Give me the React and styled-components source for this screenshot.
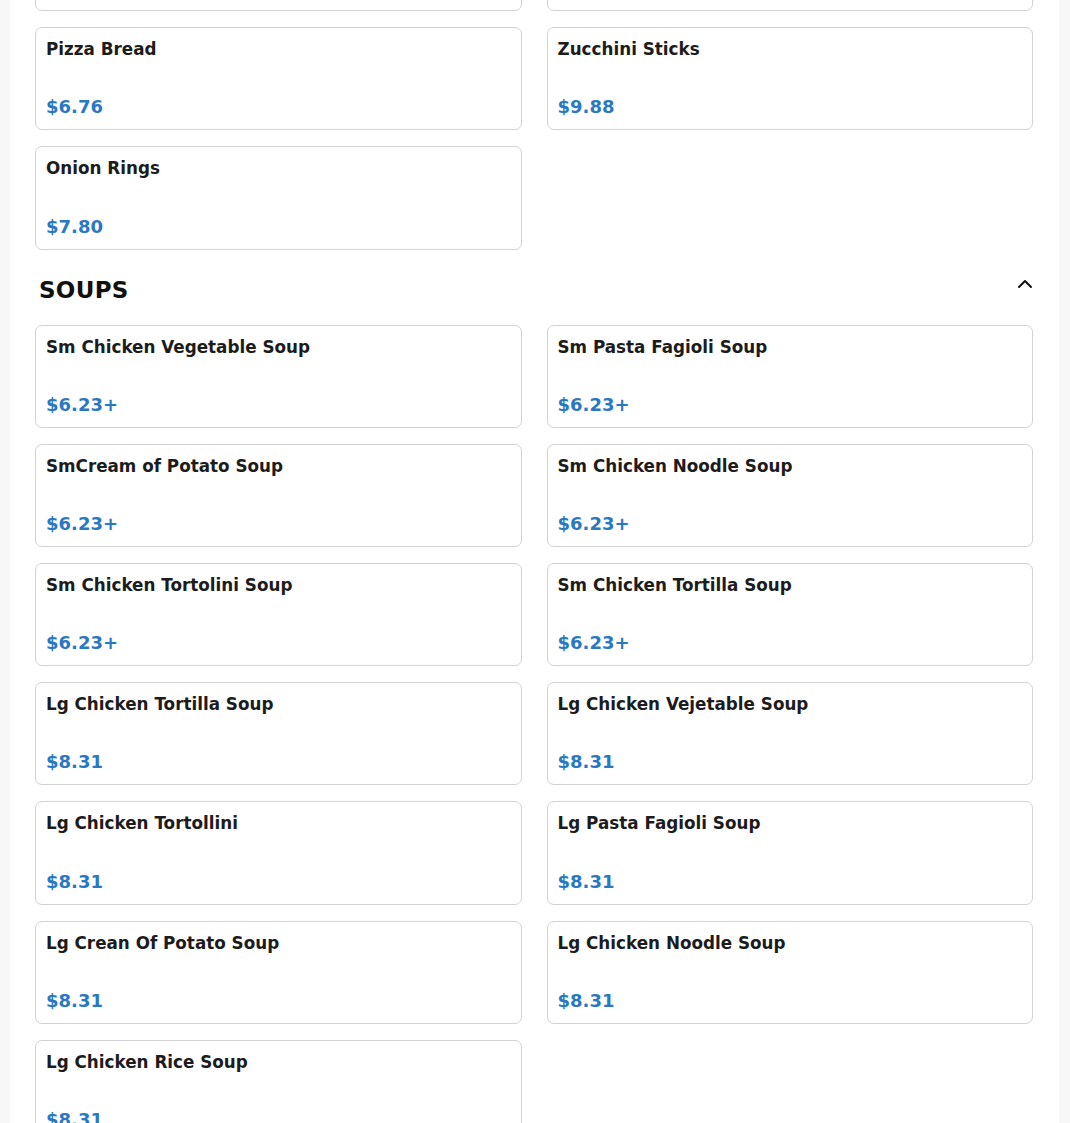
import styled, { createGlobalStyle } from "styled-components";

const GlobalStyle = createGlobalStyle`
  html, body {
    margin: 0;
    padding: 0;
    background: #f7f7f7;
    font-family: "DejaVu Sans", Verdana, sans-serif;
  }
  * { box-sizing: border-box; }
`;

const earlier = [
  { name: "", price: "" },
  { name: "", price: "" },
];

const appetizers = [
  { name: "Pizza Bread", price: "$6.76" },
  { name: "Zucchini Sticks", price: "$9.88" },
  { name: "Onion Rings", price: "$7.80" },
];

const soups = [
  { name: "Sm Chicken Vegetable Soup", price: "$6.23+" },
  { name: "Sm Pasta Fagioli Soup", price: "$6.23+" },
  { name: "SmCream of Potato Soup", price: "$6.23+" },
  { name: "Sm Chicken Noodle Soup", price: "$6.23+" },
  { name: "Sm Chicken Tortolini Soup", price: "$6.23+" },
  { name: "Sm Chicken Tortilla Soup", price: "$6.23+" },
  { name: "Lg Chicken Tortilla Soup", price: "$8.31" },
  { name: "Lg Chicken Vejetable Soup", price: "$8.31" },
  { name: "Lg Chicken Tortollini", price: "$8.31" },
  { name: "Lg Pasta Fagioli Soup", price: "$8.31" },
  { name: "Lg Crean Of Potato Soup", price: "$8.31" },
  { name: "Lg Chicken Noodle Soup", price: "$8.31" },
  { name: "Lg Chicken Rice Soup", price: "$8.31" },
];

const ChevronUp = () => (
  <svg width="24" height="24" viewBox="0 0 24 24" fill="none" stroke="#111" strokeWidth="2" strokeLinecap="round" strokeLinejoin="round">
    <path d="M6 15l6-6 6 6" />
  </svg>
);

const ItemCard = ({ item }) => (
  <Card>
    <ItemName>{item.name}</ItemName>
    <Price>{item.price}</Price>
  </Card>
);

const App = () => {
  return (
    <>
      <GlobalStyle />
      <Panel>
        <Grid $offset="-92px">
          {earlier.map((item, i) => (
            <ItemCard key={i} item={item} />
          ))}
        </Grid>
        <Grid $offset="16px">
          {appetizers.map((item) => (
            <ItemCard key={item.name} item={item} />
          ))}
        </Grid>
        <SectionHeader>
          <SectionTitle>SOUPS</SectionTitle>
          <Toggle aria-label="collapse">
            <ChevronUp />
          </Toggle>
        </SectionHeader>
        <Grid $offset="0">
          {soups.map((item) => (
            <ItemCard key={item.name} item={item} />
          ))}
        </Grid>
      </Panel>
    </>
  );
};

export default App;

const Panel = styled.div`
  margin: 0 11px 0 10px;
  padding: 0 26px 40px 25px;
  background: #ffffff;
  min-height: 1123px;
`;

const Grid = styled.div`
  display: grid;
  grid-template-columns: 1fr 1fr;
  column-gap: 25px;
  row-gap: 16px;
  margin-top: ${(p) => p.$offset};
`;

const Card = styled.div`
  height: 103.2px;
  padding: 9px 10px 10px 10px;
  border: 1px solid #d2d2d2;
  border-radius: 7px;
  background: #fff;
  display: flex;
  flex-direction: column;
  justify-content: space-between;
`;

const ItemName = styled.div`
  font-size: 16.8px;
  font-weight: bold;
  line-height: 24px;
  color: #1c1c1c;
  min-height: 24px;
`;

const Price = styled.div`
  font-size: 18px;
  font-weight: bold;
  line-height: 24px;
  color: #2a78c2;
  min-height: 24px;
`;

const SectionHeader = styled.div`
  display: flex;
  align-items: flex-start;
  justify-content: space-between;
  padding: 25px 0 0 4px;
  height: 75px;
`;

const SectionTitle = styled.h2`
  margin: 0;
  font-size: 23px;
  font-weight: bold;
  line-height: 30px;
  letter-spacing: 0.3px;
  color: #111;
`;

const Toggle = styled.button`
  border: none;
  background: none;
  padding: 0;
  margin: -3px -4px 0 0;
  width: 24px;
  height: 24px;
  display: flex;
  align-items: center;
  justify-content: center;
  cursor: pointer;
`;
